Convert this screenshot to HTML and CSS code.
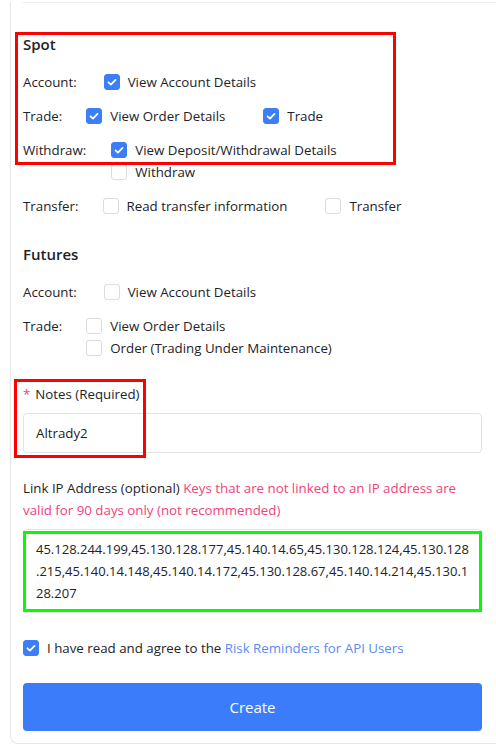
FILE: index.html
```html
<!DOCTYPE html>
<html lang="en">
<head>
<meta charset="utf-8">
<title>API Permissions</title>
<link rel="stylesheet" href="styles.css">
</head>
<body>
<div class="page">
  <div class="card">
    <div class="divider"></div>
    <div class="content">
      <section class="group spot">
        <div class="mark mark-red mark-spot"></div>
        <h3 class="group-title">Spot</h3>
        <div class="row">
          <span class="row-label lbl-account">Account:</span>
          <div class="options">
            <label class="opt"><span class="cb on"><svg viewBox="0 0 16 16"><path d="M4 8.3l2.8 2.7L12 5.6"/></svg></span><span>View Account Details</span></label>
          </div>
        </div>
        <div class="row">
          <span class="row-label lbl-trade">Trade:</span>
          <div class="options">
            <label class="opt"><span class="cb on"><svg viewBox="0 0 16 16"><path d="M4 8.3l2.8 2.7L12 5.6"/></svg></span><span>View Order Details</span></label>
            <label class="opt"><span class="cb on"><svg viewBox="0 0 16 16"><path d="M4 8.3l2.8 2.7L12 5.6"/></svg></span><span>Trade</span></label>
          </div>
        </div>
        <div class="row">
          <span class="row-label lbl-withdraw">Withdraw:</span>
          <div class="options stack">
            <label class="opt"><span class="cb on"><svg viewBox="0 0 16 16"><path d="M4 8.3l2.8 2.7L12 5.6"/></svg></span><span>View Deposit/Withdrawal Details</span></label>
            <label class="opt"><span class="cb"></span><span>Withdraw</span></label>
          </div>
        </div>
        <div class="row">
          <span class="row-label lbl-transfer">Transfer:</span>
          <div class="options">
            <label class="opt"><span class="cb"></span><span>Read transfer information</span></label>
            <label class="opt"><span class="cb"></span><span>Transfer</span></label>
          </div>
        </div>
      </section>

      <section class="group futures">
        <h3 class="group-title">Futures</h3>
        <div class="row">
          <span class="row-label lbl-account">Account:</span>
          <div class="options">
            <label class="opt"><span class="cb"></span><span>View Account Details</span></label>
          </div>
        </div>
        <div class="row">
          <span class="row-label lbl-trade">Trade:</span>
          <div class="options stack">
            <label class="opt"><span class="cb"></span><span>View Order Details</span></label>
            <label class="opt"><span class="cb"></span><span>Order (Trading Under Maintenance)</span></label>
          </div>
        </div>
      </section>

      <section class="field notes">
        <div class="mark mark-red mark-notes"></div>
        <div class="field-label"><span class="req">*</span>Notes (Required)</div>
        <div class="input">Altrady2</div>
      </section>

      <section class="field ip">
        <p class="ip-label"><span>Link IP Address (optional)</span> <span class="warn">Keys that are not linked to an IP address are valid for 90 days only (not recommended)</span></p>
        <div class="textarea">
          <div class="mark mark-green"></div>
          45.128.244.199,45.130.128.177,45.140.14.65,45.130.128.124,45.130.128<br>.215,45.140.14.148,45.140.14.172,45.130.128.67,45.140.14.214,45.130.1<br>28.207
        </div>
      </section>

      <label class="agree">
        <span class="cb on"><svg viewBox="0 0 16 16"><path d="M4 8.3l2.8 2.7L12 5.6"/></svg></span>
        <span>I have read and agree to the <a class="link">Risk Reminders for API Users</a></span>
      </label>

      <button class="btn-create">Create</button>
    </div>
  </div>
</div>
</body>
</html>
```

FILE: styles.css
```css
html, body {
  margin: 0;
  padding: 0;
  background: #ffffff;
}

body {
  font-family: "Open Sans", "Noto Sans", sans-serif;
  font-size: 13.3px;
  color: #1e2329;
}

.page {
  width: 496px;
  height: 750px;
  overflow: hidden;
}

.card {
  margin-left: 10px;
  width: 560px;
  box-sizing: border-box;
  border: 1px solid #e6e6e6;
  border-top: none;
  border-radius: 0 0 8px 8px;
  padding: 0 0 12px 12px;
}

.divider {
  height: 1px;
  width: 520px;
  margin-top: 2px;
  background: #ececec;
}

.content {
  width: 459px;
}

.group {
  position: relative;
}

.group-title {
  margin: 0;
  font-size: 15px;
  font-weight: 600;
  line-height: 22px;
  color: #1e2329;
}

.spot {
  margin-top: 30px;
}

.spot .group-title,
.futures .group-title {
  margin-bottom: 16px;
}

.futures {
  margin-top: 26px;
}

.row {
  display: flex;
  align-items: flex-start;
  line-height: 22px;
  margin-top: 12px;
}

.group-title + .row {
  margin-top: 0;
}

.row-label {
  flex: none;
  margin-right: 25px;
  white-space: nowrap;
}

.lbl-account {
  margin-right: 27px;
}

.lbl-trade {
  margin-right: 24px;
}

.lbl-withdraw {
  margin-right: 25px;
}

.lbl-transfer {
  margin-right: 24px;
}

.options {
  display: flex;
  flex-wrap: wrap;
  column-gap: 38px;
}

.options.stack {
  flex-direction: column;
}

.opt {
  display: flex;
  align-items: flex-start;
  gap: 8px;
  white-space: nowrap;
}

.cb {
  flex: none;
  width: 16px;
  height: 16px;
  margin-top: 3px;
  box-sizing: border-box;
  border: 1px solid #dcdcdc;
  border-radius: 3px;
  background: #ffffff;
  display: flex;
}

.cb.on {
  background: #3c7df8;
  border-color: #3c7df8;
}

.cb svg {
  width: 14px;
  height: 14px;
  fill: none;
  stroke: #ffffff;
  stroke-width: 2;
  stroke-linecap: round;
  stroke-linejoin: round;
}

.mark {
  position: absolute;
  box-sizing: border-box;
  border: 3px solid #ff0000;
  pointer-events: none;
}

.mark-spot {
  top: -1px;
  left: -8px;
  width: 381px;
  height: 133px;
}

.field {
  position: relative;
}

.notes {
  margin-top: 24px;
}

.mark-notes {
  top: -4px;
  left: -9px;
  width: 132px;
  height: 79px;
}

.field-label {
  line-height: 22px;
}

.req {
  color: #f0437c;
  margin-right: 5px;
}

.input {
  margin-top: 8px;
  height: 40px;
  box-sizing: border-box;
  border: 1px solid #e3e3e3;
  border-radius: 4px;
  padding: 0 12px;
  line-height: 38px;
}

.ip {
  margin-top: 24px;
}

.ip-label {
  margin: 0;
  line-height: 22px;
}

.warn {
  color: #f0437c;
}

.textarea {
  position: relative;
  margin-top: 8px;
  box-sizing: border-box;
  height: 84px;
  border: 1px solid #e3e3e3;
  border-radius: 4px;
  padding: 8px 2px 8px 12px;
  font-size: 13px;
  line-height: 22px;
  white-space: nowrap;
}

.mark-green {
  border-color: #00ff00;
  top: 1px;
  left: -1px;
  width: 459px;
  height: 81px;
}

.agree {
  display: flex;
  align-items: flex-start;
  gap: 8px;
  margin-top: 24px;
  line-height: 22px;
}

.link {
  color: #5a8cf2;
  text-decoration: none;
}

.btn-create {
  display: block;
  width: 459px;
  height: 48px;
  margin-top: 24px;
  border: none;
  border-radius: 4px;
  background: #3b7cfb;
  color: #ffffff;
  font-family: "Open Sans", "Noto Sans", sans-serif;
  font-size: 15px;
}
```
